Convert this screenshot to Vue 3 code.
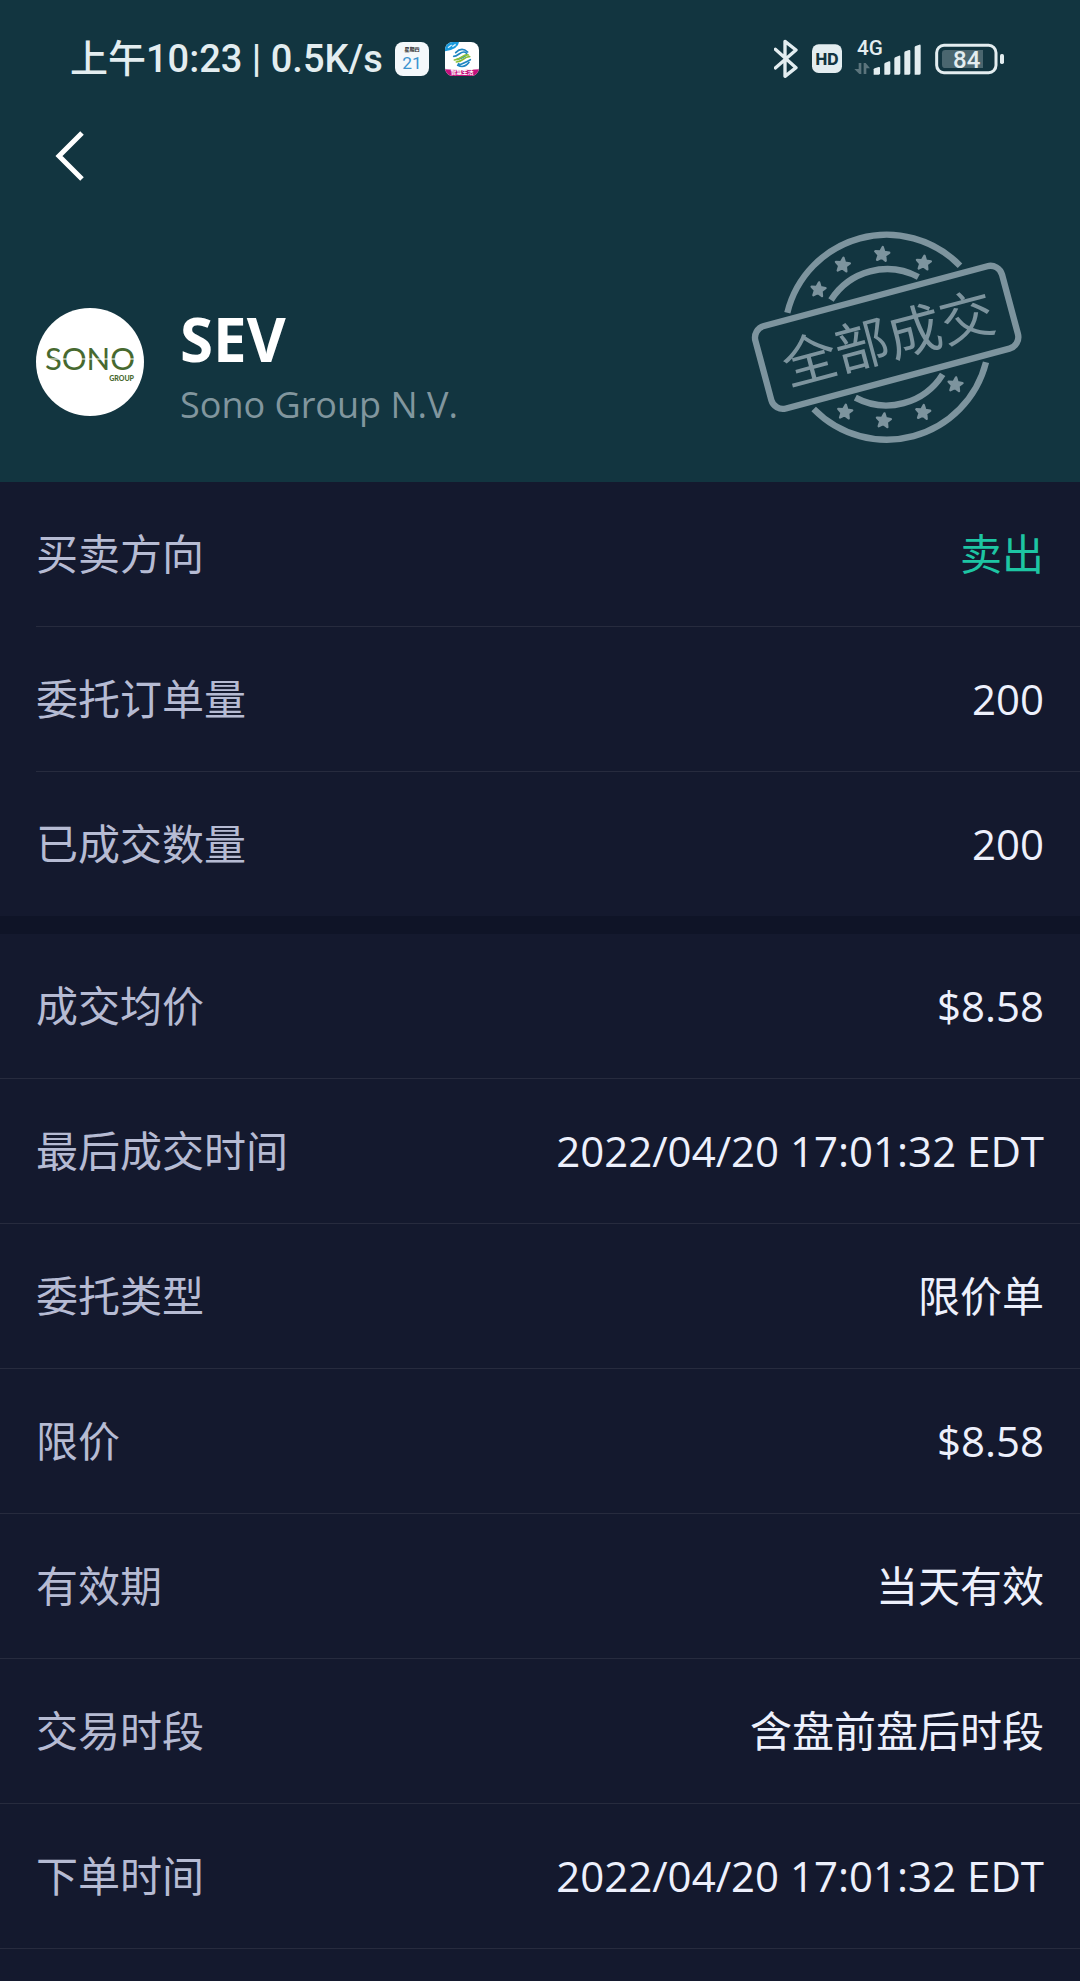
<script setup>
const stock = {
  symbol: "SEV",
  name: "Sono Group N.V.",
};

const summary = [
  { label: "买卖方向", value: "卖出", side: "sell" },
  { label: "委托订单量", value: "200" },
  { label: "已成交数量", value: "200" },
];

const details = [
  { label: "成交均价", value: "$8.58" },
  { label: "最后成交时间", value: "2022/04/20 17:01:32 EDT" },
  { label: "委托类型", value: "限价单" },
  { label: "限价", value: "$8.58" },
  { label: "有效期", value: "当天有效" },
  { label: "交易时段", value: "含盘前盘后时段" },
  { label: "下单时间", value: "2022/04/20 17:01:32 EDT" },
];

const star = "M0-22 6-8 21-7 10 3 13 18 0 10-13 18-10 3-21-7-6-8Z";

const stars = [
  [265, 209],
  [338, 135],
  [456, 103],
  [581, 129],
  [676, 494],
  [579, 577],
  [461, 602],
  [345, 576],
];
</script>

<template>
  <div class="page" lang="zh-CN">
    <header class="header">
      <div class="status">
        <span class="clock">上午10:23 | 0.5K/s</span>
        <div class="apps">
          <svg class="app" viewBox="0 0 102 102" aria-hidden="true">
            <rect width="102" height="102" rx="24" fill="#f4f8fb" />
            <text class="cal-week" x="51" y="28" text-anchor="middle">星期四</text>
            <text class="cal-day" x="51" y="81" text-anchor="middle">21</text>
          </svg>
          <svg class="app" viewBox="0 0 102 102" aria-hidden="true">
            <defs>
              <clipPath id="app-shape"><rect width="102" height="102" rx="24" /></clipPath>
            </defs>
            <g clip-path="url(#app-shape)">
              <rect width="102" height="102" fill="#fff" />
              <path d="M0 0H42Q40 22 0 28Z" fill="#189ade" />
              <path d="M9 17 20 9M22 14 32 7" stroke="#d8f1fd" stroke-width="4" />
              <path d="M0 82Q51 86 102 82V102H0Z" fill="#c5117d" />
              <g fill="none" stroke-width="5" stroke-linecap="round">
                <path d="M32 32Q50 14 68 30" stroke="#1f86c2" />
                <path d="M26 43C40 43 48 25 61 31S53 48 37 52" stroke="#1f86c2" />
                <path d="M28 54C48 54 55 34 70 39" stroke="#8abf37" />
                <path d="M34 60C54 60 58 42 74 44" stroke="#8abf37" />
                <path d="M41 65C34 74 60 62 76 53" stroke="#1f86c2" />
                <path d="M38 70Q58 80 72 61" stroke="#1f86c2" />
              </g>
              <text class="app-strip" x="51" y="97" text-anchor="middle">智慧生活</text>
            </g>
          </svg>
        </div>

        <div class="indicators">
          <svg width="26" height="40" viewBox="72 57 78 120" aria-hidden="true">
            <path
              d="M76 88 138 143 105 169V64L138 90 76 144"
              fill="none"
              stroke="#e3edf0"
              stroke-width="10"
              stroke-linecap="round"
              stroke-linejoin="round"
            />
          </svg>
          <svg width="30" height="40" viewBox="186 57 90 120" aria-hidden="true">
            <rect x="186" y="73" width="90" height="86" rx="20" fill="#e3edf0" />
            <text class="hd" x="231" y="134" text-anchor="middle">HD</text>
          </svg>
          <svg width="68" height="60" viewBox="312 27 204 180" aria-hidden="true">
            <text class="net" x="321" y="104">4G</text>
            <g fill="#e3edf0">
              <path d="M371 164V148Q371 146 374 145L386 141Q390 140 390 144V160Q390 164 386 164Z" />
              <path d="M403 164V132Q403 129 406 128L417 124Q421 123 421 127V160Q421 164 417 164Z" />
              <path d="M433 164V116Q433 113 436 112L447 107Q451 106 451 110V160Q451 164 447 164Z" />
              <path d="M463 164V98Q463 95 466 94L477 90Q481 89 481 93V160Q481 164 477 164Z" />
              <path d="M494 164V82Q494 79 497 78L508 74Q512 73 512 77V160Q512 164 508 164Z" />
            </g>
            <path d="M326 129H334V162H328L313 147H326ZM341 162V129H347L360 145H349V162Z" fill="#5b747c" />
          </svg>
          <svg width="70" height="40" viewBox="552 57 210 120" aria-hidden="true">
            <rect x="560" y="76" width="178" height="82" rx="22" fill="none" stroke="#e3edf0" stroke-width="9" />
            <path d="M586 90H699V144H586Q576 144 576 134V100Q576 90 586 90Z" fill="#4a666f" />
            <rect x="750" y="102" width="12" height="30" rx="5" fill="#e3edf0" />
            <text class="charge" x="650" y="143" text-anchor="middle">84</text>
          </svg>
        </div>
      </div>

      <nav class="nav">
        <button class="back" type="button" aria-label="返回">
          <svg width="36" height="56" viewBox="0 0 36 56" aria-hidden="true">
            <path d="M29 5 6 28 29 51" fill="none" stroke="#fff" stroke-width="5" />
          </svg>
        </button>
      </nav>

      <div class="summary">
        <div class="stock">
          <svg class="logo" viewBox="0 0 108 108" aria-hidden="true">
            <circle cx="54" cy="54" r="54" fill="#fff" />
            <text class="logo-name" x="54" y="62" text-anchor="middle">SONO</text>
            <path d="M8 51H100" stroke="#fff" stroke-width="1" />
            <text class="logo-group" x="98" y="73" text-anchor="end">GROUP</text>
          </svg>
          <div class="stock-text">
            <h1>{{ stock.symbol }}</h1>
            <p>{{ stock.name }}</p>
          </div>
        </div>

        <svg class="stamp" viewBox="0 0 960 720" role="img" aria-label="全部成交">
          <g fill="none" stroke="#7d949e" stroke-width="19">
            <path d="M172 278A307 307 0 0 1 690 137" />
            <path d="M768 427A307 307 0 0 1 251 567" />
            <path d="M303 240A199 199 0 0 1 565 171" />
            <path d="M638 463A199 199 0 0 1 376 533" />
          </g>
          <path
            v-for="([x, y], i) in stars"
            :key="i"
            :d="star"
            :transform="`translate(${x} ${y}) rotate(6)`"
            fill="#7d949e"
            stroke="#7d949e"
            stroke-width="7"
            stroke-linejoin="round"
          />
          <g transform="translate(470 352) rotate(-15)">
            <rect x="-383" y="-128" width="766" height="256" rx="36" fill="none" stroke="#7d949e" stroke-width="19" />
            <text class="stamp-text" x="3" y="64" text-anchor="middle">全部成交</text>
          </g>
        </svg>
      </div>
    </header>

    <main>
      <dl class="group group-inset">
        <div v-for="row in summary" :key="row.label" class="row">
          <dt>{{ row.label }}</dt>
          <dd :class="row.side">{{ row.value }}</dd>
        </div>
      </dl>
      <dl class="group">
        <div v-for="row in details" :key="row.label" class="row">
          <dt>{{ row.label }}</dt>
          <dd>{{ row.value }}</dd>
        </div>
      </dl>
    </main>
  </div>
</template>

<style>
body {
  margin: 0;
  background: #14192e;
}
</style>

<style scoped>
.page {
  min-height: 100vh;
  background: #14192e;
  color: #edf0fc;
  font-family: "Open Sans", "Noto Sans CJK SC", sans-serif;
}

.header {
  background: #123540;
}

.status {
  display: flex;
  align-items: center;
  height: 118px;
  padding: 0 76px 0 70px;
}

.clock {
  color: #e3edf0;
  font-family: Roboto, "Noto Sans CJK SC", sans-serif;
  font-size: 38px;
  font-weight: 500;
  line-height: 40px;
  white-space: nowrap;
}

.apps {
  display: flex;
  gap: 16px;
  margin-left: 12px;
}

.app {
  width: 34px;
  height: 34px;
}

.cal-week {
  fill: #222;
  font-family: "Noto Sans CJK SC", sans-serif;
  font-size: 15px;
  font-weight: 700;
}

.cal-day {
  fill: #3b94d0;
  font-family: Roboto, sans-serif;
  font-size: 52px;
}

.app-strip {
  fill: #fff;
  font-size: 17px;
  font-weight: 700;
}

.indicators {
  display: flex;
  align-items: center;
  gap: 12px;
  margin-left: auto;
}

.hd {
  fill: #123540;
  font-family: Inter, sans-serif;
  font-size: 47px;
  font-weight: 800;
}

.net {
  fill: #e3edf0;
  font-family: Roboto, sans-serif;
  font-size: 62px;
  font-weight: 500;
}

.charge {
  fill: #e3edf0;
  font-family: Roboto, sans-serif;
  font-size: 72px;
  font-weight: 500;
}

.nav {
  display: flex;
  align-items: center;
  height: 76px;
  padding: 0 53px;
}

.back {
  display: flex;
  padding: 0;
  border: 0;
  background: transparent;
}

.summary {
  display: flex;
  align-items: flex-end;
  justify-content: space-between;
  padding: 26px 30px 22px 36px;
}

.stock {
  display: flex;
  align-items: center;
  gap: 36px;
  margin-bottom: 32px;
}

.logo {
  width: 108px;
  height: 108px;
}

.logo-name {
  fill: #47692f;
  font-family: Lato, sans-serif;
  font-size: 31px;
}

.logo-group {
  fill: #47692f;
  font-family: Lato, sans-serif;
  font-size: 7px;
  font-weight: 900;
}

.stock-text h1 {
  margin: 0;
  color: #fff;
  font-size: 60px;
  font-weight: 700;
  line-height: 86px;
}

.stock-text p {
  margin: 0;
  color: #81969e;
  font-size: 36px;
  line-height: 46px;
}

.stamp {
  width: 320px;
  height: 240px;
}

.stamp-text {
  fill: #7d949e;
  font-family: "Noto Sans CJK SC", sans-serif;
  font-size: 163px;
}

.group {
  margin: 0;
}

.group-inset {
  padding-left: 36px;
  border-bottom: 18px solid #0f1427;
}

.row {
  display: flex;
  align-items: center;
  justify-content: space-between;
  height: 144px;
  padding: 0 36px;
  border-bottom: 1px solid #272b3e;
  font-size: 42px;
  line-height: 60px;
}

.group-inset .row {
  padding-left: 0;
}

.group-inset .row:last-child {
  border-bottom: 0;
}

dt {
  color: #b6bbd3;
}

dd {
  margin: 0;
}

.sell {
  color: #1dc5a3;
}
</style>
